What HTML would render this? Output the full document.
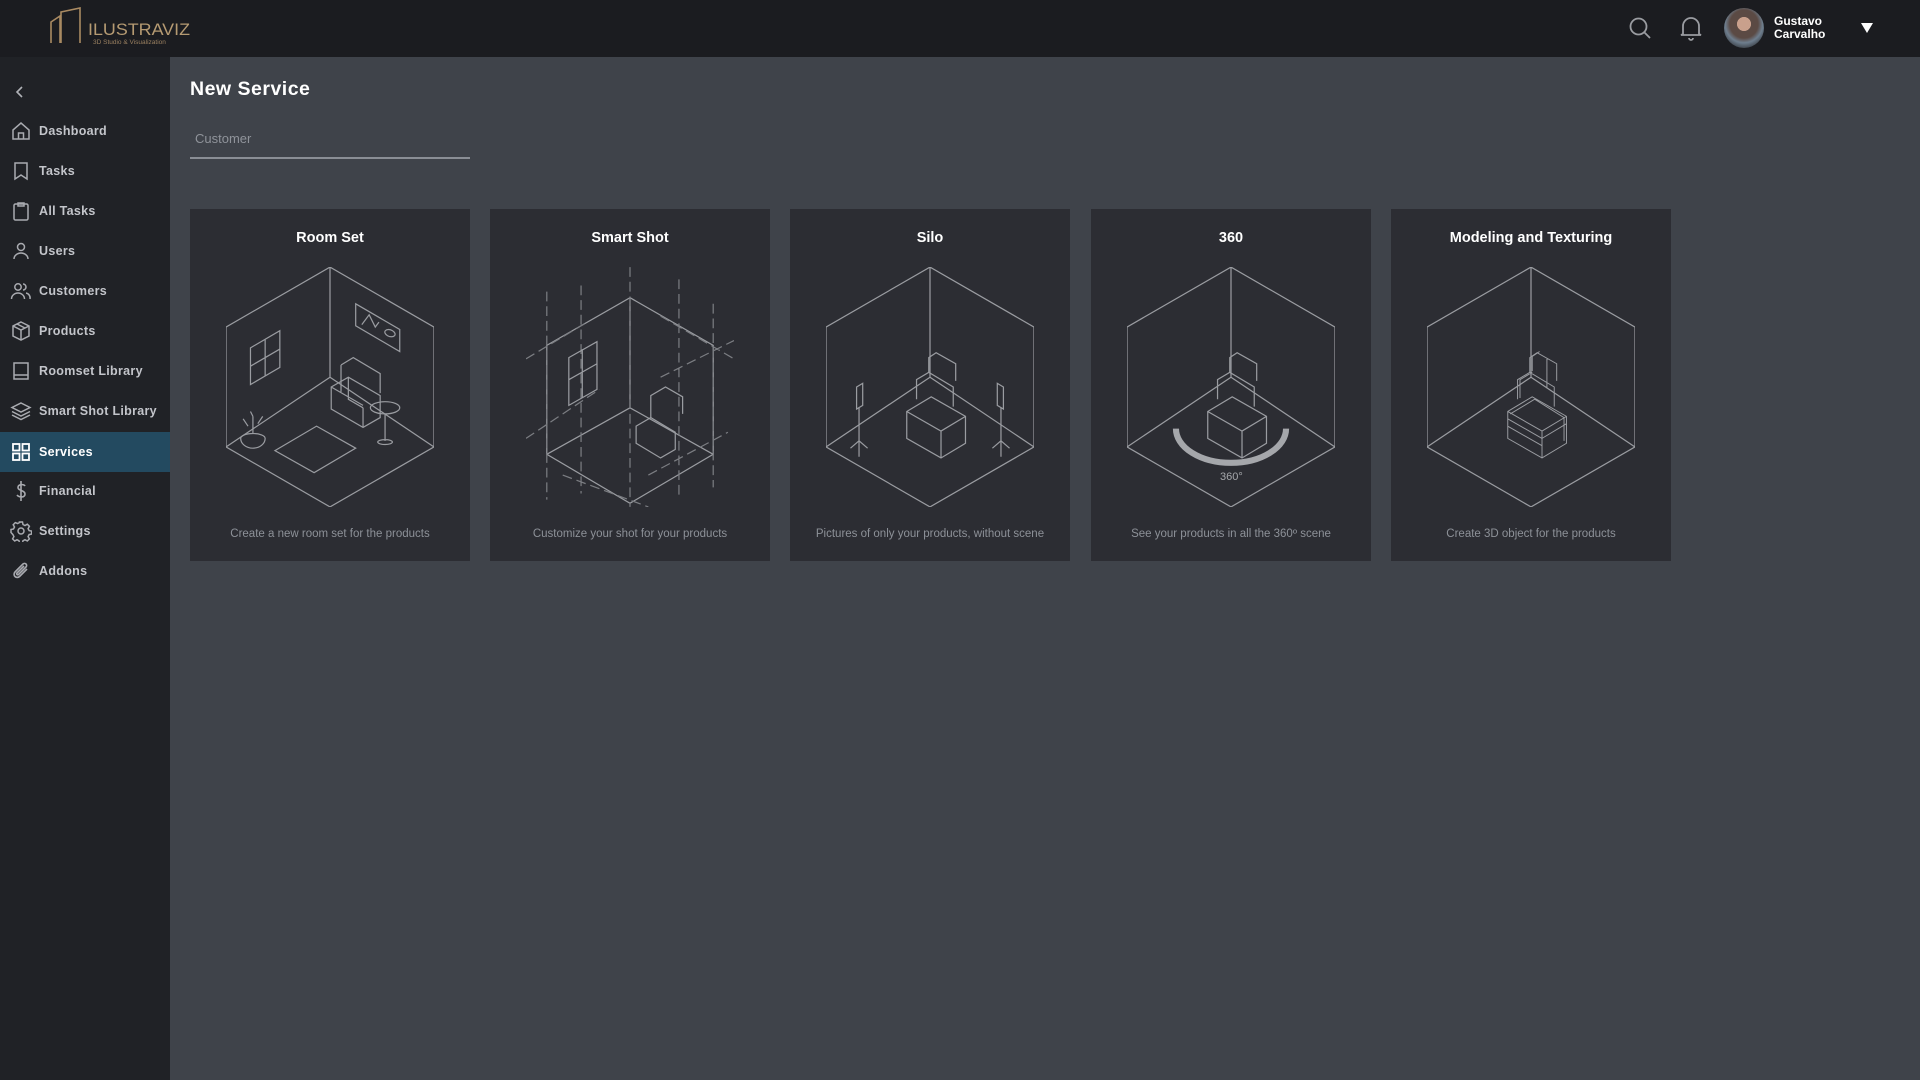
<!DOCTYPE html>
<html><head><meta charset="utf-8">
<style>
*{margin:0;padding:0;box-sizing:border-box}
body{width:1920px;height:1080px;overflow:hidden;background:#3f434a;font-family:"Liberation Sans","DejaVu Sans",sans-serif;position:relative}
.hdr{position:absolute;left:0;top:0;width:1920px;height:57px;background:#1b1c20}
.side{position:absolute;left:0;top:57px;width:170px;height:1023px;background:#202226}
.mi{position:absolute;left:0;width:170px;height:40px;color:#c3c5ca;font-size:12.5px;font-weight:bold;letter-spacing:0.3px}
.mi span{position:absolute;left:39px;top:13px}
.mi svg{position:absolute;left:10px;top:9px}
.mi.act{background:#234a60;color:#fff}
.card{position:absolute;top:209px;width:280px;height:352px;background:#2c2d33}
.card h3{position:absolute;top:21px;left:0;width:100%;text-align:center;color:#fff;font-size:14.5px;font-weight:bold}
.card p{position:absolute;top:319px;left:0;width:100%;text-align:center;color:#8d9198;font-size:11.5px}
.card svg.il{position:absolute;left:36px;top:58px}
</style></head><body>
<div class="hdr">
 <svg style="position:absolute;left:48px;top:7px" width="150" height="40" viewBox="0 0 150 40">
  <g fill="none" stroke="#a98a62" stroke-width="1.6"><path d="M3 36V15L12 9V36M13 36V5L32 1V36"/></g>
  <text x="40" y="28" fill="#b59a72" font-size="17" font-family="Liberation Sans" textLength="102" lengthAdjust="spacingAndGlyphs">ILUSTRAVIZ</text>
  <text x="45" y="37" fill="#9a8060" font-size="6.5" font-family="Liberation Sans">3D Studio &amp; Visualization</text>
 </svg>
 <svg style="position:absolute;left:1628px;top:16px" width="24" height="24" viewBox="0 0 24 24" fill="none" stroke="#9a9ca1" stroke-width="1.8"><circle cx="10.5" cy="10.5" r="8"/><path d="M16.5 16.5L22 22"/></svg>
 <svg style="position:absolute;left:1680px;top:15px" width="22" height="26" viewBox="0 0 22 26" fill="none" stroke="#9a9ca1" stroke-width="1.8"><path d="M3 19V11a8 8 0 0 1 16 0v8l2 1H1z"/><path d="M9 23a2 2 0 0 0 4 0"/></svg>
 <div style="position:absolute;left:1724px;top:8px;width:40px;height:40px;border-radius:50%;background:radial-gradient(circle at 50% 40%,#c9a08c 0 22%,#5b4a44 23% 45%,#6e7e8e 60%,#3a3f46 80%)"></div>
 <div style="position:absolute;left:1774px;top:15px;color:#fff;font-size:12px;font-weight:bold;line-height:13px">Gustavo<br>Carvalho</div>
 <div style="position:absolute;left:1861px;top:23px;width:0;height:0;border-left:6px solid transparent;border-right:6px solid transparent;border-top:10px solid #fff"></div>
</div>
<div class="side">
 <svg style="position:absolute;left:14px;top:28px" width="12" height="14" viewBox="0 0 12 14" fill="none" stroke="#b0b2b7" stroke-width="1.6"><path d="M8 2L3 7l5 5"/></svg>
</div>
<div class="mi" style="top:111px"><svg width="22" height="22" viewBox="0 0 22 22" fill="none" stroke="#a9abb0" stroke-width="1.5"><path d="M3 10L11 3l8 7v9H3z"/><path d="M8.5 19v-6h5v6"/></svg><span>Dashboard</span></div>
<div class="mi" style="top:151px"><svg width="22" height="22" viewBox="0 0 22 22" fill="none" stroke="#a9abb0" stroke-width="1.5"><path d="M5 3h12v16l-6-4-6 4z"/></svg><span>Tasks</span></div>
<div class="mi" style="top:191px"><svg width="22" height="22" viewBox="0 0 22 22" fill="none" stroke="#a9abb0" stroke-width="1.5"><rect x="4" y="4" width="14" height="16" rx="1.5"/><path d="M8 3h6v3H8z"/></svg><span>All Tasks</span></div>
<div class="mi" style="top:231px"><svg width="22" height="22" viewBox="0 0 22 22" fill="none" stroke="#a9abb0" stroke-width="1.5"><circle cx="11" cy="7" r="3.5"/><path d="M4 19a7 6 0 0 1 14 0"/></svg><span>Users</span></div>
<div class="mi" style="top:271px"><svg width="22" height="22" viewBox="0 0 22 22" fill="none" stroke="#a9abb0" stroke-width="1.5"><circle cx="8" cy="7" r="3.2"/><path d="M1.5 19a6.5 6 0 0 1 13 0M13 4a3 3 0 0 1 0 6M16 13a5 5 0 0 1 4 6"/></svg><span>Customers</span></div>
<div class="mi" style="top:311px"><svg width="22" height="22" viewBox="0 0 22 22" fill="none" stroke="#a9abb0" stroke-width="1.5"><path d="M11 2l8 4v10l-8 4-8-4V6z"/><path d="M3 6l8 4 8-4M11 10v10M7 4l8 4"/></svg><span>Products</span></div>
<div class="mi" style="top:351px"><svg width="22" height="22" viewBox="0 0 22 22" fill="none" stroke="#a9abb0" stroke-width="1.5"><path d="M4 3h14v16H4zM4 15h14"/></svg><span>Roomset Library</span></div>
<div class="mi" style="top:391px"><svg width="22" height="22" viewBox="0 0 22 22" fill="none" stroke="#a9abb0" stroke-width="1.5"><path d="M11 3l9 4.5-9 4.5-9-4.5z"/><path d="M2 11.5l9 4.5 9-4.5M2 15l9 4.5 9-4.5"/></svg><span>Smart Shot Library</span></div>
<div class="mi act" style="top:432px"><svg width="22" height="22" viewBox="0 0 22 22" fill="none" stroke="#fff" stroke-width="1.8"><rect x="3" y="3" width="6.5" height="6.5"/><rect x="12.5" y="3" width="6.5" height="6.5"/><rect x="3" y="12.5" width="6.5" height="6.5"/><rect x="12.5" y="12.5" width="6.5" height="6.5"/></svg><span>Services</span></div>
<div class="mi" style="top:471px"><svg width="22" height="22" viewBox="0 0 22 22" fill="none" stroke="#a9abb0" stroke-width="1.6"><path d="M11 1v20M15 6c-1-2-7-2-7 1.5S15 10 15 14s-6 3.5-8 1"/></svg><span>Financial</span></div>
<div class="mi" style="top:511px"><svg width="22" height="22" viewBox="0 0 22 22" fill="none" stroke="#a9abb0" stroke-width="1.5"><circle cx="11" cy="11" r="3"/><path d="M9.5 2h3l.5 2.5 2 1 2.3-1.3 2.1 2.1-1.3 2.3 1 2 2.5.5v3l-2.5.5-1 2 1.3 2.3-2.1 2.1-2.3-1.3-2 1-.5 2.5h-3l-.5-2.5-2-1-2.3 1.3-2.1-2.1 1.3-2.3-1-2L1 12.5v-3l2.5-.5 1-2-1.3-2.3 2.1-2.1L7.6 3.5l2-1z"/></svg><span>Settings</span></div>
<div class="mi" style="top:551px"><svg width="22" height="22" viewBox="0 0 22 22" fill="none" stroke="#a9abb0" stroke-width="1.6"><path d="M17 9l-7.5 7.5a3 3 0 0 1-4.5-4.5L13 4a2 2 0 0 1 3 3l-7.5 7.5a1 1 0 0 1-1.5-1.5L14 6"/></svg><span>Addons</span></div>

<div style="position:absolute;left:190px;top:78px;color:#fff;font-size:19.5px;font-weight:bold;letter-spacing:0.5px">New Service</div>
<div style="position:absolute;left:195px;top:131px;color:#8f939a;font-size:13px">Customer</div>
<div style="position:absolute;left:190px;top:157px;width:280px;height:2px;background:#8a8e95"></div>

<div class="card" style="left:190px"><h3>Room Set</h3>
<svg class="il" width="208" height="240" viewBox="0 0 170 196" fill="none" stroke="#9a9ca1" stroke-width="1">
<path d="M85 0L170 49V147L85 196L0 147V49Z M85 0V90 M85 90L0 147 M85 90L170 147"/>
<path d="M20 66L44 52V82L20 96Z M32 59V89 M20 81L44 67"/>
<path d="M106 30L142 51V69L106 48Z M111 47l6-8 5 10 3-4 M130 54a4 2.5 20 1 0 8 0a4 2.5 20 1 0-8 0"/>
<path d="M86 98l14-8 26 15v18l-14 8-26-15z M100 90v18l12 7 M112 115v16 M86 98l26 15 M94 80l10-6 22 13v16 M94 80v22"/>
<path d="M118 115a12 5 0 1 0 24 0a12 5 0 1 0-24 0 M130 120v22 M124 143a6 2 0 1 0 12 0a6 2 0 1 0-12 0"/>
<path d="M40 150l34-20 32 18-34 20z"/>
<path d="M12 140a10 8 0 0 0 20 0a10 4 0 0 0-20 0 M22 136v-14 M18 130l-4-6 M26 128l4-6 M22 122l-2-4"/>
</svg>
<p>Create a new room set for the products</p></div>

<div class="card" style="left:490px"><h3>Smart Shot</h3>
<svg class="il" width="208" height="240" viewBox="0 0 170 196" fill="none" stroke="#9a9ca1" stroke-width="1">
<path d="M85 25L153 64V153L85 193L17 153V64Z M85 25V115 M85 115L17 153 M85 115L153 153"/>
<g stroke-dasharray="8 4" stroke="#7b7d82"><path d="M85 0V196 M17 20V190 M153 30V180 M125 10V190 M45 15V185 M0 140L60 100 M110 90L170 60 M0 75L50 45 M110 40L170 75 M30 170L100 196 M100 170L165 135"/></g>
<path d="M35 74L58 61V100L35 113Z M35 92L58 79 M46 67v40"/>
<path d="M90 130l12-7 20 12v14l-12 7-20-12z M102 123v-18l12-7 14 8v14"/>
</svg>
<p>Customize your shot for your products</p></div>

<div class="card" style="left:790px"><h3>Silo</h3>
<svg class="il" width="208" height="240" viewBox="0 0 170 196" fill="none" stroke="#9a9ca1" stroke-width="1">
<path d="M85 0L170 49V147L85 196L0 147V49Z M85 0V90 M85 90L0 147 M85 90L170 147"/>
<path d="M66 118l20-12 28 16v22l-20 12-28-16z M66 118l28 16v22 M94 134l20-12 M74 108v-16l10-6 20 12v16 M84 86v-12l6-4 16 9v14"/>
<path d="M25 98l5-3v18l-5 3z M27 115v40 M20 148l7-6 7 6 M145 98l-5-3v18l5 3z M143 115v40 M136 148l7-6 7 6"/>
</svg>
<p>Pictures of only your products, without scene</p></div>

<div class="card" style="left:1091px"><h3>360</h3>
<svg class="il" width="208" height="240" viewBox="0 0 170 196" fill="none" stroke="#9a9ca1" stroke-width="1">
<path d="M85 0L170 49V147L85 196L0 147V49Z M85 0V90 M85 90L0 147 M85 90L170 147"/>
<path d="M66 118l20-12 28 16v22l-20 12-28-16z M66 118l28 16v22 M94 134l20-12 M74 108v-16l10-6 20 12v16 M84 86v-12l6-4 16 9v14"/>
<path d="M40 132a45 28 0 0 0 90 0" stroke="#a5a7ab" stroke-width="5"/>
<text x="76" y="174" fill="#a5a7ab" stroke="none" font-size="9" font-family="Liberation Sans">360°</text>
</svg>
<p>See your products in all the 360º scene</p></div>

<div class="card" style="left:1391px"><h3>Modeling and Texturing</h3>
<svg class="il" width="208" height="240" viewBox="0 0 170 196" fill="none" stroke="#9a9ca1" stroke-width="1">
<path d="M85 0L170 49V147L85 196L0 147V49Z M85 0V90 M85 90L0 147 M85 90L170 147"/>
<g stroke-width="0.8"><path d="M66 118l20-12 28 16v22l-20 12-28-16z M68 120l20-12 24 15v19 M66 118l28 16v22 M66 124l28 16 M66 130l28 16 M94 134l20-12 M94 140l20-12 M74 108v-16l10-6 20 12v16 M76 107v-15l10-6 M84 86v-12l6-4 16 9v14 M86 85v-12l6-4 M98 75v24"/></g>
</svg>
<p>Create 3D object for the products</p></div>
</body></html>
